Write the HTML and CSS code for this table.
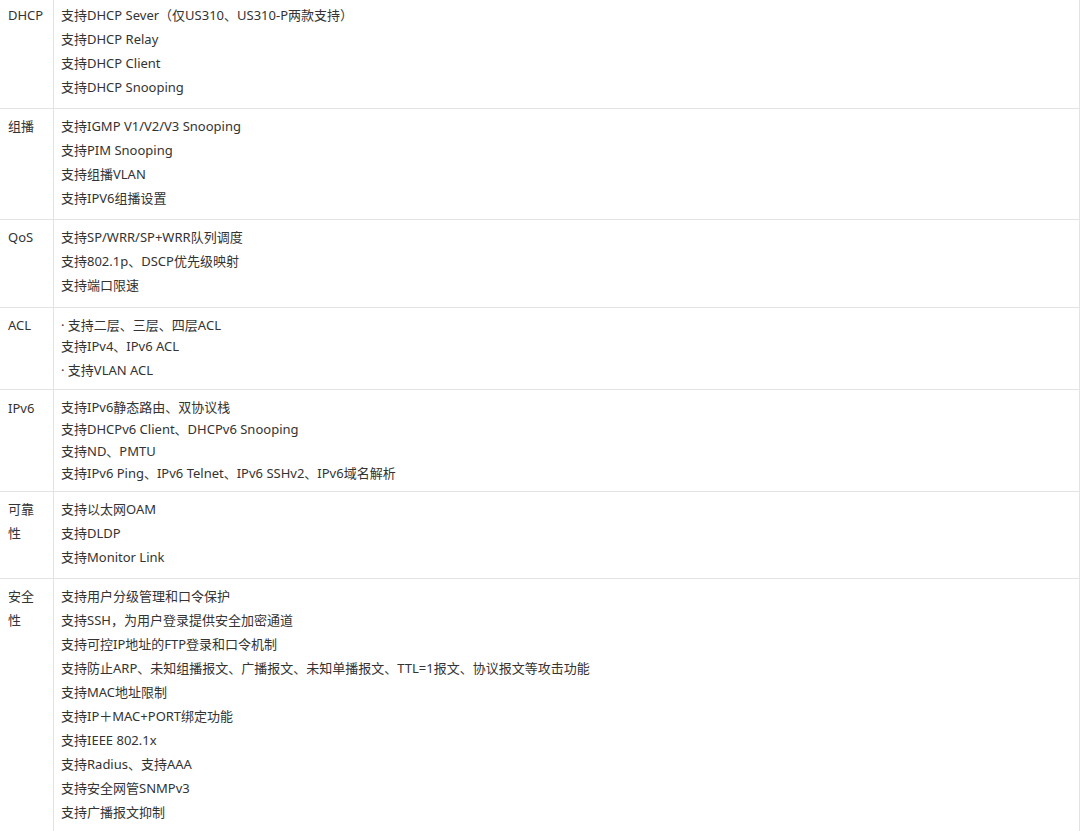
FILE: index.html
```html
<!DOCTYPE html>
<html>
<head>
	<meta charset="utf-8">
	<title>产品规格</title>
	<link rel="stylesheet" href="styles.css">
</head>
<body>
<table class="spec">
	<tr>
		<td class="key">DHCP</td>
		<td class="val">
			<p>支持DHCP Sever（仅US310、US310-P两款支持）</p>
			<p>支持DHCP Relay</p>
			<p>支持DHCP Client</p>
			<p>支持DHCP Snooping</p>
		</td>
	</tr>
	<tr>
		<td class="key">组播</td>
		<td class="val">
			<p>支持IGMP V1/V2/V3 Snooping</p>
			<p>支持PIM Snooping</p>
			<p>支持组播VLAN</p>
			<p>支持IPV6组播设置</p>
		</td>
	</tr>
	<tr class="qos">
		<td class="key">QoS</td>
		<td class="val">
			<p>支持SP/WRR/SP+WRR队列调度</p>
			<p>支持802.1p、DSCP优先级映射</p>
			<p>支持端口限速</p>
		</td>
	</tr>
	<tr class="acl">
		<td class="key">ACL</td>
		<td class="val">
			<p>· 支持二层、三层、四层ACL</p>
			<p class="tight">支持IPv4、IPv6 ACL</p>
			<p class="gap">· 支持VLAN ACL</p>
		</td>
	</tr>
	<tr class="ipv6">
		<td class="key">IPv6</td>
		<td class="val">
			<p>支持IPv6静态路由、双协议栈</p>
			<p>支持DHCPv6 Client、DHCPv6 Snooping</p>
			<p>支持ND、PMTU</p>
			<p>支持IPv6 Ping、IPv6 Telnet、IPv6 SSHv2、IPv6域名解析</p>
		</td>
	</tr>
	<tr>
		<td class="key">可靠性</td>
		<td class="val">
			<p>支持以太网OAM</p>
			<p>支持DLDP</p>
			<p>支持Monitor Link</p>
		</td>
	</tr>
	<tr>
		<td class="key">安全性</td>
		<td class="val">
			<p>支持用户分级管理和口令保护</p>
			<p>支持SSH，为用户登录提供安全加密通道</p>
			<p>支持可控IP地址的FTP登录和口令机制</p>
			<p>支持防止ARP、未知组播报文、广播报文、未知单播报文、TTL=1报文、协议报文等攻击功能</p>
			<p>支持MAC地址限制</p>
			<p>支持IP＋MAC+PORT绑定功能</p>
			<p>支持IEEE 802.1x</p>
			<p>支持Radius、支持AAA</p>
			<p>支持安全网管SNMPv3</p>
			<p>支持广播报文抑制</p>
		</td>
	</tr>
</table>
</body>
</html>
```

FILE: styles.css
```css
body {
	margin: 0;
	background: #fff;
	font-family: "Noto Sans", "Noto Sans CJK SC", sans-serif;
	font-size: 13px;
	color: #333;
}

.spec {
	border-collapse: collapse;
	table-layout: fixed;
	width: 1081px;
	margin: -3px 0 0 -1px;
}

.spec td {
	border: 1px solid #e3e3e3;
	vertical-align: top;
	padding: 5px 8px 9px;
	line-height: 24px;
}

.spec .key {
	width: 37px;
}

.spec .val {
	padding-left: 7px;
}

.spec p {
	margin: 0;
	white-space: nowrap;
}

.qos .val {
	padding-bottom: 10px;
}

.acl .tight {
	line-height: 18px;
}
.acl .gap {
	margin-top: 3px;
}
.acl .val {
	padding-bottom: 7px;
}

.ipv6 td {
	padding-top: 6px;
	padding-bottom: 7px;
}
.ipv6 .val p {
	line-height: 22px;
}
```
